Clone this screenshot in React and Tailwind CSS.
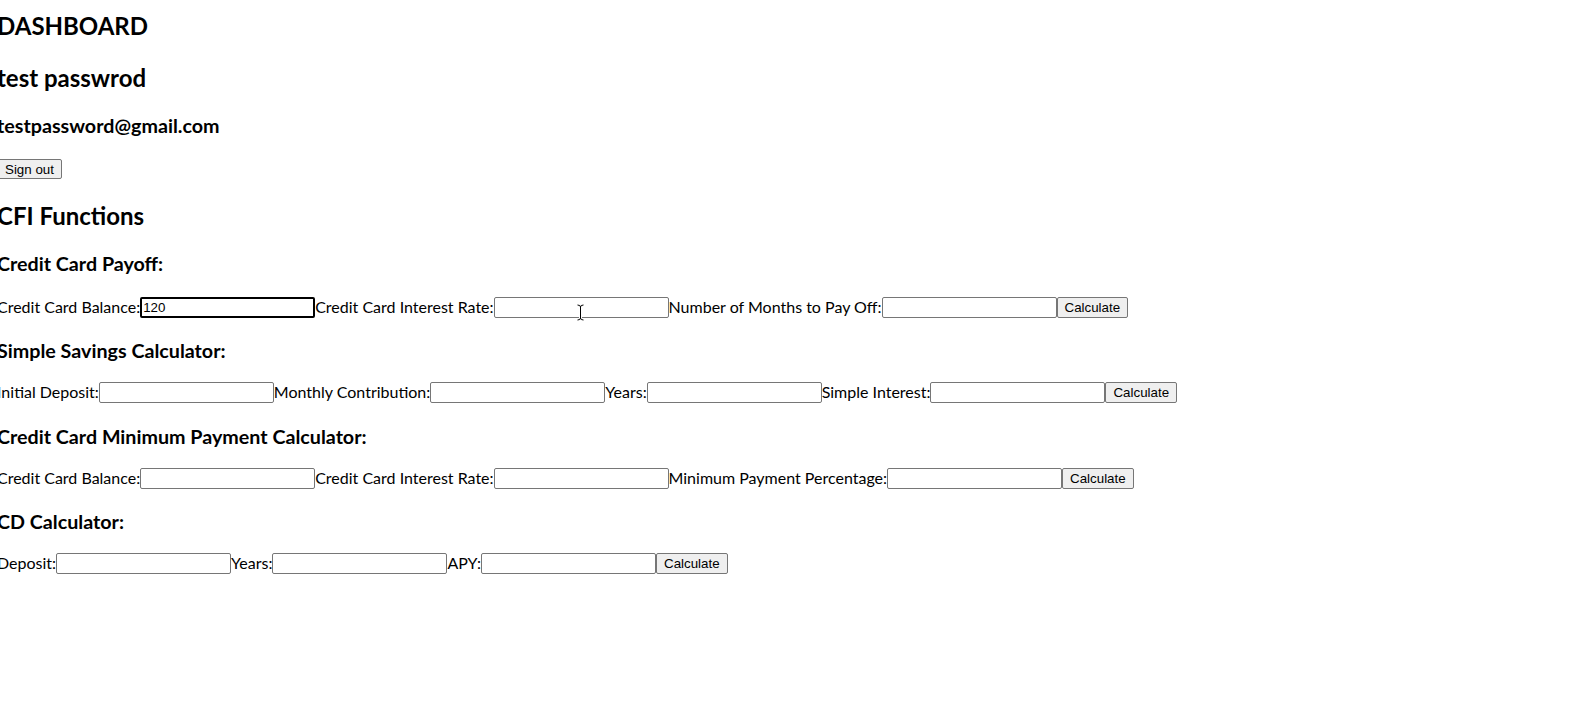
import React from 'react';

/**
 * Dashboard page with the CFI calculators
 */
const sections = [
    {
        title: 'Credit Card Payoff:',
        fields: ['Credit Card Balance:', 'Credit Card Interest Rate:', 'Number of Months to Pay Off:'],
        values: ['120', '', '']
    },
    {
        title: 'Simple Savings Calculator:',
        fields: ['Initial Deposit:', 'Monthly Contribution:', 'Years:', 'Simple Interest:'],
        values: ['', '', '', '']
    },
    {
        title: 'Credit Card Minimum Payment Calculator:',
        fields: ['Credit Card Balance:', 'Credit Card Interest Rate:', 'Minimum Payment Percentage:'],
        values: ['', '', '']
    },
    {
        title: 'CD Calculator:',
        fields: ['Deposit:', 'Years:', 'APY:'],
        values: ['', '', '']
    }
];

const Field = ({ label, value, focused }) => (
    <>
        <label className="text-[16px] leading-[19px] mb-[2px] whitespace-nowrap">{label}</label>
        <input
            type="text"
            defaultValue={value}
            className={`w-[175px] h-[21px] bg-white rounded-[2px] text-black font-['Arial','Liberation_Sans',sans-serif] text-[13.33px] outline-none ${
                focused ? 'border-2 border-black px-[1px]' : 'border border-[#767676] px-[2px]'
            }`}
        />
    </>
);

const CalcButton = ({ children, className = '' }) => (
    <button
        className={`h-[21px] px-[7px] bg-[#efefef] border border-[#767676] rounded-[2px] text-black font-['Arial','Liberation_Sans',sans-serif] text-[13.33px] leading-[15px] whitespace-nowrap ${className}`}
    >
        {children}
    </button>
);

const App = () => {
    return (
        <div className="relative min-h-[708px] bg-white text-black font-['Lato','Open_Sans',sans-serif] -ml-[3px] overflow-hidden">
            <h2 className="mt-[12px] text-[24px] leading-[28px] font-bold">DASHBOARD</h2>
            <h2 className="mt-[24px] text-[24px] leading-[28px] font-bold">test passwrod</h2>
            <h3 className="mt-[23px] text-[19.7px] leading-[22px] font-bold">testpassword@gmail.com</h3>
            <div className="mt-[22px] flex">
                <CalcButton className="!h-[20px]">Sign out</CalcButton>
            </div>
            <h2 className="mt-[23px] text-[24px] leading-[28px] font-bold">CFI Functions</h2>

            {sections.map((section, i) => (
                <div key={section.title}>
                    <h3
                        className={`${i === 0 ? 'mt-[23px] mb-[22px]' : 'mt-[22.3px] mb-[20px]'} text-[19.7px] leading-[22px] font-bold`}
                    >
                        {section.title}
                    </h3>
                    <div className="flex items-center h-[21px]">
                        {section.fields.map((field, j) => (
                            <Field
                                key={field}
                                label={field}
                                value={section.values[j]}
                                focused={i === 0 && j === 0}
                            />
                        ))}
                        <CalcButton>Calculate</CalcButton>
                    </div>
                </div>
            ))}

            {/* mouse text cursor over the interest rate input */}
            <svg
                className="absolute left-[579px] top-[304px] pointer-events-none"
                width="9"
                height="17"
                viewBox="0 0 9 17"
                fill="none"
            >
                <path
                    d="M1.5 1 Q4.5 1 4.5 3 Q4.5 1 7.5 1 M4.5 3 V14 M1.5 16 Q4.5 16 4.5 14 Q4.5 16 7.5 16"
                    stroke="white"
                    strokeWidth="3"
                />
                <path
                    d="M1.5 1 Q4.5 1 4.5 3 Q4.5 1 7.5 1 M4.5 3 V14 M1.5 16 Q4.5 16 4.5 14 Q4.5 16 7.5 16"
                    stroke="black"
                    strokeWidth="1"
                />
            </svg>
        </div>
    );
};

export default App;
